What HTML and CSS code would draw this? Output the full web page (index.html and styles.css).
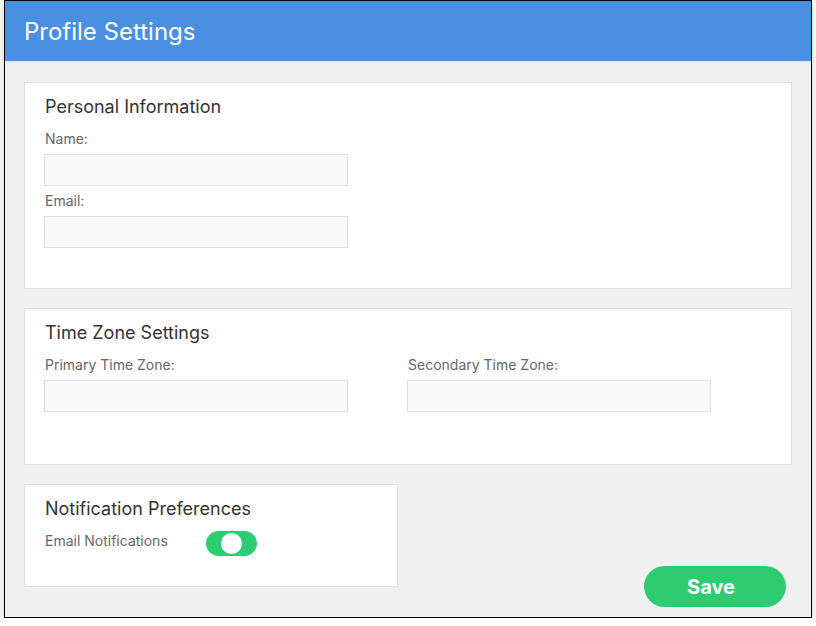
FILE: index.html
```html
<!DOCTYPE html>
<html>
<head>
<meta charset="utf-8">
<link rel="stylesheet" href="styles.css">
</head>
<body>
<div class="frame">
  <header class="header">
    <h1 class="header-title">Profile Settings</h1>
  </header>
  <main class="content">
    <section class="card">
      <h2 class="card-title">Personal Information</h2>
      <label class="label">Name:</label>
      <div class="input"></div>
      <label class="label">Email:</label>
      <div class="input"></div>
    </section>
    <section class="card card-tz">
      <h2 class="card-title">Time Zone Settings</h2>
      <div class="cols">
        <div class="col">
          <label class="label">Primary Time Zone:</label>
          <div class="input"></div>
        </div>
        <div class="col">
          <label class="label">Secondary Time Zone:</label>
          <div class="input"></div>
        </div>
      </div>
    </section>
    <div class="bottom">
      <section class="card card-notif">
        <h2 class="card-title">Notification Preferences</h2>
        <div class="toggle-row">
          <span class="label label-inline">Email Notifications</span>
          <span class="toggle"><span class="knob"></span></span>
        </div>
      </section>
      <button class="save">Save</button>
    </div>
  </main>
</div>
</body>
</html>
```

FILE: styles.css
```css
* { box-sizing: border-box; }
html, body { margin: 0; padding: 0; background: #fff; }
body { font-family: Inter, "Noto Sans", sans-serif; }
.frame {
  margin: 0 4px;
  width: 808px;
  height: 618px;
  border: 1px solid #000;
  background: #f0f0f0;
  box-shadow: 0 4px 8px rgba(0,0,0,0.2);
  display: flex;
  flex-direction: column;
}
.header {
  background: #4a90e2;
  height: 61px;
  border-bottom: 1px solid #d4e2f2;
  padding: 0 19px;
  display: flex;
  align-items: center;
}
.header-title {
  margin: 0;
  font-size: 24px;
  font-weight: 400;
  color: #fff;
}
.content {
  padding: 20px 19px 10px 19px;
  display: flex;
  flex-direction: column;
  gap: 19px;
  flex: 1;
}
.card {
  background: #fff;
  border: 1px solid #e0e0e0;
  padding: 12px 20px 35px 19px;
}
.card-title {
  margin: 0 0 10px 1px;
  font-size: 18px;
  font-weight: 400;
  color: #333;
  line-height: 24px;
}
.label {
  display: block;
  font-size: 14px;
  color: #666;
  line-height: 20px;
  margin: 0 0 5px 1px;
}
.input {
  width: 304px;
  height: 32px;
  background: #f9f9f9;
  border: 1px solid #e0e0e0;
  margin-bottom: 5px;
}
.card-tz { padding-bottom: 47px; }
.cols { display: flex; }
.col { width: 363px; }
.bottom {
  display: flex;
  justify-content: space-between;
  align-items: flex-end;
  flex: 1;
}
.card-notif {
  width: 374px;
  align-self: flex-start;
  padding-bottom: 30px;
}
.toggle-row {
  display: flex;
  align-items: flex-start;
  gap: 38px;
}
.label-inline { margin: 0 0 0 1px; }
.toggle {
  width: 51px;
  height: 25px;
  border-radius: 13px;
  background: #2ecc71;
  display: flex;
  align-items: center;
  justify-content: center;
}
.knob {
  width: 21px;
  height: 21px;
  border-radius: 50%;
  background: #fff;
}
.save {
  width: 142px;
  height: 41px;
  border: none;
  border-radius: 21px;
  background: #2ecc71;
  color: #fff;
  font-family: Inter, "Noto Sans", sans-serif;
  font-weight: 700;
  font-size: 20px;
  padding: 0 8px 0 0;
  margin-right: 6px;
}
```
